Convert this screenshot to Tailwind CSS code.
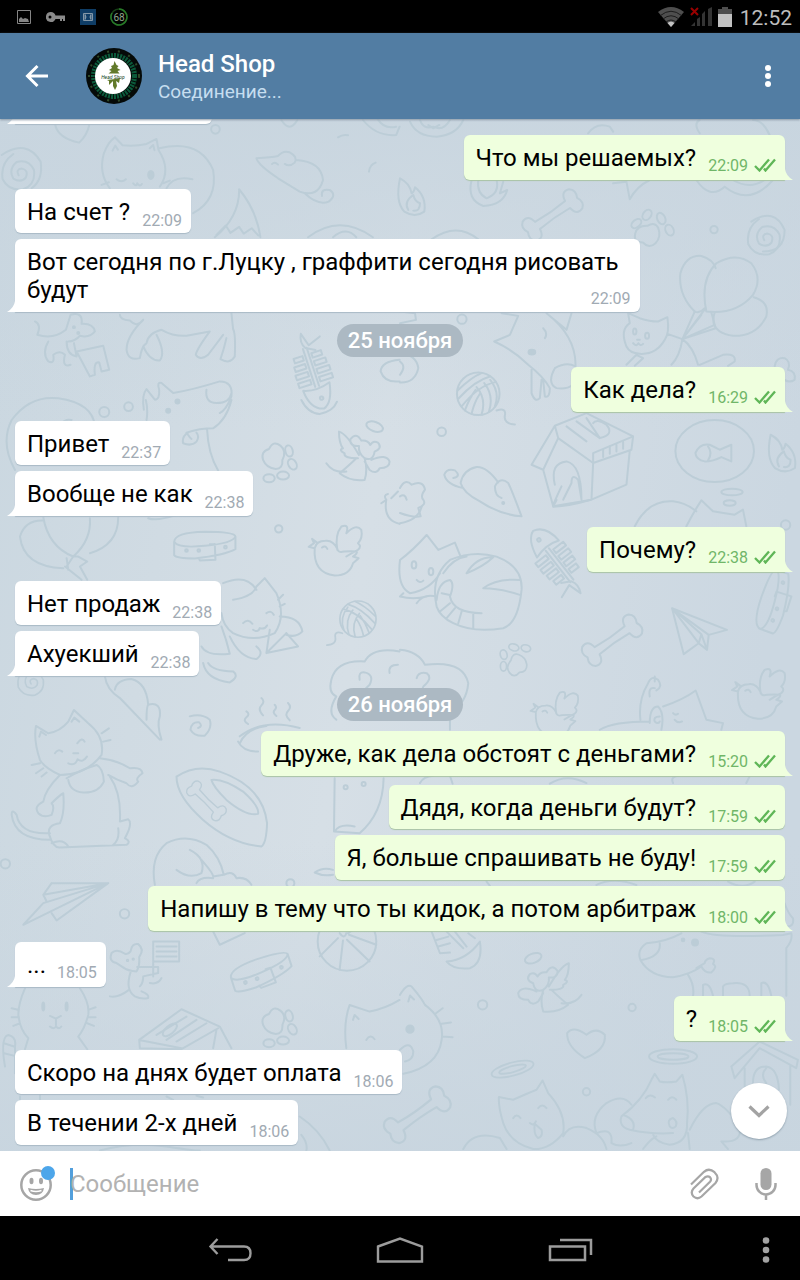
<!DOCTYPE html>
<html lang="ru">
<head>
    <meta charset="UTF-8">
    <meta name="viewport" content="width=device-width, initial-scale=1.0">
    <title>Head Shop</title>
    <script src="https://cdn.jsdelivr.net/npm/@tailwindcss/browser@4"></script>
</head>
<body class="bg-black font-['Roboto',sans-serif]">

<!-- Shared shapes -->
<svg class="absolute size-0" aria-hidden="true">
    <defs>
        <symbol id="ticks" viewBox="0 0 22 14">
            <path d="M1 8l4.500 4.500L15 1.500M10 10.500l1.500 2L21 1.500" fill="none" stroke="#5fb657" stroke-width="2.300"/>
        </symbol>
        <symbol id="tail-in" viewBox="0 0 8 11"><path d="M8 0Q7 7 0 11H8Z" fill="#fff"/></symbol>
        <symbol id="tail-out" viewBox="0 0 8 11"><path d="M0 0Q1 7 8 11H0Z" fill="#efffde"/></symbol>

        <g id="paw">
            <path d="M-30 5Q-38 -20 -12 -28Q0 -55 22 -38Q42 -22 28 5Q30 32 8 32Q-20 30 -30 5Z"/>
            <ellipse cx="48" cy="-22" rx="11" ry="17" transform="rotate(-15 48 -22)"/>
            <ellipse cx="58" cy="18" rx="12" ry="17" transform="rotate(-30 58 18)"/>
            <ellipse cx="30" cy="52" rx="18" ry="12"/>
            <ellipse cx="-12" cy="60" rx="17" ry="12"/>
        </g>
        <g id="bone">
            <path d="M-55 -13Q0 -8 55 -13Q60 -45 85 -35Q102 -22 90 0Q102 22 85 35Q60 45 55 13Q0 8 -55 13Q-60 45 -85 35Q-102 22 -90 0Q-102 -22 -85 -35Q-60 -45 -55 -13Z"/>
        </g>
        <g id="spiral">
            <path d="M-6 6Q-16 -12 4 -14Q24 -10 16 12Q2 30 -22 16Q-38 -12 -12 -34Q24 -44 40 -10Q46 34 8 48Q-36 54 -54 18Q-62 -30 -22 -58"/>
        </g>
        <g id="yarn">
            <circle r="64"/>
            <path d="M-62 -10Q-20 -50 10 -62M-60 15Q-10 -40 35 -52M-50 38Q0 -25 52 -35M-5 -20Q25 15 10 62M18 -32Q48 5 32 54M36 -42Q66 -5 50 38M-40 50Q-28 15 -8 -12M-20 60Q-12 25 5 0M55 50Q85 40 80 65T110 92"/>
        </g>
        <g id="bird">
            <path d="M-60 -20Q-65 55 0 62Q45 62 55 25L72 10L55 5Q70 -5 66 -10Q50 -12 28 -10Q10 -5 8 -18Q-5 -45 -28 -42Q-55 -42 -60 -20ZM-60 -20L-78 -24L-62 -35L-68 -48L-52 -36M8 -15Q0 -60 20 -85Q45 -95 35 -65Q65 -95 80 -75Q85 -50 70 -35Q82 -25 70 -15Q50 -5 35 5M-38 -22Q-28 -30 -22 -18"/>
        </g>
        <g id="fishbone">
            <path d="M-95 -8L-55 -20L-70 -60M-95 -8Q-70 5 -50 -8L-35 -35M-50 -12L70 -12M-50 0L70 0M70 -45Q130 -35 140 -5Q130 35 70 38Q85 0 70 -45Z"/>
            <path d="M-30 -50h14v30h-14zM-5 -56h14v36h-14zM20 -60h14v40h-14zM45 -60h14v40h-14zM-30 8h14v28h-14zM-5 8h14v34h-14zM20 8h14v38h-14zM45 8h14v38h-14z"/>
            <circle cx="108" cy="-8" r="5"/>
        </g>
        <g id="mouse">
            <path d="M-105 -55Q-100 -35 -40 5L25 45Q80 65 95 10Q90 -45 15 -50M-105 -55Q-60 -58 -40 -62Q-25 -80 -5 -73Q20 -60 10 -42Q-5 -28 -20 -38M40 50Q80 88 112 75Q138 55 115 40Q88 35 92 58M-58 -38q8 -8 18 2"/>
        </g>
        <g id="flame">
            <path d="M-35 -55Q-5 -40 0 -10Q8 -15 10 -28Q45 0 38 45Q10 65 -22 45Q-50 15 -35 -55ZM-10 40Q-25 15 5 -5Q10 15 25 20Q25 45 5 42"/>
        </g>
        <g id="plane">
            <path d="M-80 -60L85 5L30 20L25 65L0 45L-45 78ZM-80 -60L0 45L8 18ZM-80 -60L30 20M8 18L25 65"/>
        </g>
        <g id="collar">
            <path d="M-92 -12Q-90 -40 0 -42Q90 -42 92 -28L92 10Q60 28 -30 38Q-85 38 -92 28ZM-92 -12Q-80 8 0 0Q85 -8 92 -28M15 -5L30 -5L32 42L-15 44L-18 36"/>
            <circle cx="-55" cy="14" r="4"/><circle cx="-18" cy="14" r="4"/><circle cx="62" cy="4" r="4"/>
        </g>
        <g id="angel">
            <path d="M-45 -22Q-60 -5 -35 5Q-30 35 -5 25Q15 10 12 -12Q40 -10 38 -32Q20 -55 5 -28Q-15 -30 -22 -15Q-30 -30 -45 -22ZM12 15Q50 -50 72 -55Q72 -20 60 -5Q75 0 55 10Q60 25 15 25M-25 30Q-70 10 -80 35Q-80 55 -50 55Q-40 75 -20 60L-5 35M-5 25Q-15 60 -5 90Q40 95 70 70Q40 45 20 25M50 65Q90 70 110 40"/>
            <ellipse cx="-35" cy="-70" rx="26" ry="14" transform="rotate(-20 -35 -70)"/>
        </g>
        <g id="halo">
            <ellipse rx="72" ry="22"/><ellipse rx="46" ry="10"/>
        </g>
    </defs>
</svg>

<div class="flex h-screen flex-col">

    <!-- Status bar -->
    <div class="flex h-[33px] shrink-0 items-center justify-between bg-black pr-2 pl-4 text-[#bdbdbd]">
        <div class="flex items-center gap-3.5">
            <svg class="h-4 w-4" viewBox="0 0 16 16" fill="none" stroke="#858585"><path d="M1.500 1.500h13v13h-13z"/><path d="M3 13v-3l2-2 2 2 2-1 3 1 1 3z" fill="#858585" stroke="none"/></svg>
            <svg class="h-4 w-5" viewBox="0 0 20 16"><path d="M5 3a5 5 0 1 0 4.500 7H14v2h2v-2h1v2h2V6.500H9.500A5 5 0 0 0 5 3z" fill="#8a8a8a"/><circle cx="4" cy="8" r="1.500" fill="#000"/></svg>
            <svg class="h-4 w-4" viewBox="0 0 16 16"><path d="M0 0h16v16H0z" fill="#0f3d66"/><path d="M3.500 4.500h9v7h-9z" fill="none" stroke="#8397a7"/><path d="M5 5.500q2 2.500 0 5zM11 5.500q-2 2.500 0 5z" fill="#8397a7" stroke="#8397a7"/></svg>
            <svg class="size-[18px]" viewBox="0 0 18 18"><circle cx="9" cy="9" r="8" fill="none" stroke="#173f17" stroke-width="1.500"/><path d="M9 1a8 8 0 1 1-7 4" fill="none" stroke="#277a27" stroke-width="1.500"/><text x="9" y="12.500" text-anchor="middle" font-size="10" fill="#8fa58c">68</text></svg>
        </div>
        <div class="flex items-center gap-1.5">
            <svg class="h-5 w-[26px]" viewBox="0 0 26 20"><path d="M0 5Q13-5 26 5L13 20z" fill="#4e4e4e"/><path d="M2.500 8.500Q13 0 23.500 8.500M5 12Q13 5.500 21 12M8 15Q13 11 18 15" fill="none" stroke="#1c1c1c"/><path d="M9.500 16Q13 13 16.500 16L13 20z" fill="#c4c4c4"/></svg>
            <svg class="h-5 w-[22px]" viewBox="0 0 22 20"><path d="M1 19l4-4v4zM7 19v-7l3-2v9zM12 19V7l3-3v15zM18 19V2l4-2v19z" fill="#343434"/><path d="M1 1l7 7M8 1L1 8" stroke="#900" stroke-width="2"/></svg>
            <svg class="h-5 w-3.5" viewBox="0 0 14 20"><path d="M4 0h6v2h4v18H0V2h4z" fill="#4e4e4e"/><path d="M0 7h14v13H0z" fill="#c2c2c2"/></svg>
            <span class="mt-0.5 ml-0.5 text-[21px] leading-7">12:52</span>
        </div>
    </div>

    <!-- Chat header -->
    <header class="relative z-10 flex h-[86px] shrink-0 items-center bg-[#527da3] pr-5 pl-6 text-white shadow-[0_1px_2px_#8b9aa7]">
        <button type="button" aria-label="Назад" class="mr-9 size-[26px]">
            <svg class="size-[26px]" viewBox="0 0 26 26" fill="none" stroke="#fff" stroke-width="3"><path d="M24 13H4M13.500 3L3.500 13l10 10"/></svg>
        </button>
        <svg class="size-14" viewBox="0 0 56 56">
            <circle cx="28" cy="28" r="28" fill="#050a08"/>
            <circle cx="28" cy="28" r="25" fill="none" stroke="#2f4a2a" stroke-width="2" stroke-dasharray="2 9"/>
            <circle cx="28" cy="28" r="20.500" fill="none" stroke="#0b5a3a" stroke-width="5" stroke-dasharray="2 1"/>
            <circle cx="27" cy="28" r="18" fill="#fff"/>
            <path d="M28.500 13l2 4 2 1-1.500 2 3.500 2-3 1 2 2.500h-11l3-2.500-2.500-1 3-2-1-2 2.500-1zM29 31l5-1-1 5-3-2 1 5-2 4-2-4v-5l-4 4v-4l-2-1z" fill="#61792a"/>
            <text x="27" y="30.500" text-anchor="middle" font-size="5" font-style="italic" fill="#123f1d">Head Shop</text>
        </svg>
        <div class="ml-4 flex-1 pt-1">
            <h1 class="text-2xl leading-7 font-medium">Head Shop</h1>
            <p class="text-[19px] leading-7 text-[#c6def0]">Соединение...</p>
        </div>
        <button type="button" aria-label="Меню" class="flex h-10 w-6 items-center justify-center">
            <svg class="h-6 w-2" viewBox="0 0 8 24" fill="#fff"><circle cx="4" cy="4" r="3"/><circle cx="4" cy="12" r="3"/><circle cx="4" cy="20" r="3"/></svg>
        </button>
    </header>

    <!-- Conversation -->
    <main class="relative flex-1 overflow-hidden bg-[#cbd7e1]">
        <svg class="absolute inset-0 size-full" viewBox="0 119 800 1032" preserveAspectRatio="xMidYMin slice" aria-hidden="true">
            <defs>
                <linearGradient id="sky" x1="0" y1="0.100" x2="1" y2="0.300">
                    <stop offset="0" stop-color="#cad7e0"/>
                    <stop offset="0.500" stop-color="#d6dfe6"/>
                    <stop offset="1" stop-color="#cbd7e1"/>
                </linearGradient>
                <linearGradient id="dusk" x1="0" y1="0" x2="0" y2="1">
                    <stop offset="0" stop-color="#c8d5df" stop-opacity="0.900"/>
                    <stop offset="0.300" stop-color="#c8d5df" stop-opacity="0"/>
                    <stop offset="0.700" stop-color="#c8d5df" stop-opacity="0"/>
                    <stop offset="1" stop-color="#c8d5df" stop-opacity="0.900"/>
                </linearGradient>
            </defs>
            <path d="M0 119h800v1032H0z" fill="url(#sky)"/>
            <path d="M0 119h800v1032H0z" fill="url(#dusk)"/>

            <!-- Doodles, each area in its own 1/3 scale space -->
            <g fill="none" stroke="#bccdd7" stroke-width="6" stroke-linecap="round" stroke-linejoin="round">
                <g transform="translate(0 120) scale(0.333)">
                    <path d="M166 15Q175 55 238 68Q262 45 268 15"/>
                    <circle cx="647" cy="28" r="13"/>
                    <path d="M845 0Q870 40 893 0M1090 0Q1130 50 1190 45L1200 20M1130 -10Q1150 30 1190 20M1015 52Q1030 42 1045 46M1108 155Q1110 135 1128 128"/>
                    <use href="#spiral" transform="translate(62 160)"/>
                    <path d="M5 105Q80 55 122 125Q130 180 95 205"/>
                    <path d="M330 205Q295 160 312 100Q325 65 345 52L368 76Q405 80 440 72L470 57L476 90Q515 150 480 200M338 92l8 -15 8 12M450 85l10 -10 4 16M350 178q15 12 28 0M400 190q10 12 12 0q8 12 14 2M305 195l22 -8M490 190l20 -8M478 85Q600 55 640 150Q655 240 580 280M500 205Q520 165 578 178"/>
                    <ellipse cx="453" cy="165" rx="8" ry="12" fill="#bccdd7"/>
                    <use href="#mouse" transform="translate(875 170)"/>
                    <path d="M645 352Q720 290 718 208Q770 270 782 352M650 345l28 -28 14 22 26 -18 14 20 24 -16 20 22"/>
                    <path d="M925 352Q1020 280 1120 352M1000 352Q1040 318 1070 352"/>
                    <path d="M360 585Q360 600 390 602Q410 625 430 600M430 600Q380 650 380 690Q385 725 420 715Q425 680 440 670Q445 640 485 630Q520 650 560 648L630 635Q590 690 588 705Q600 725 625 705L670 645M430 680Q450 725 480 722Q498 700 470 645M695 580L700 628Q708 640 705 710Q690 735 662 718Q672 690 680 655"/>
                    <path d="M105 605Q125 615 112 645Q160 660 198 630L212 585Q250 575 245 612Q280 610 285 635Q270 655 240 648Q225 665 205 665M145 665Q125 700 145 725Q165 735 160 705Q180 690 195 705Q185 745 212 735M200 665Q200 705 230 710L222 670M230 695L310 678L328 750L305 755L298 728Q280 725 285 765L270 770Z"/>
                    <circle cx="222" cy="622" r="3"/><circle cx="235" cy="640" r="3"/>
                    <use href="#fishbone" transform="translate(925 735) rotate(72)"/>
                    <path d="M432 870Q425 825 440 808L465 840Q480 840 478 810Q470 785 485 790L520 820Q580 810 660 785Q700 785 695 830Q680 870 660 880M620 810Q615 850 650 850Q690 850 695 820"/>
                    <circle cx="533" cy="845" r="6" fill="#bccdd7"/>
                    <path d="M1200 720Q1145 725 1143 755Q1155 790 1200 785"/>
                </g>

                <g transform="translate(400 120) scale(0.333)">
                    <path d="M30 5Q50 50 110 50Q170 45 190 0M60 0Q70 30 100 20Q130 35 150 0M85 15l15 10 18 -10"/>
                    <path d="M565 40Q590 5 630 20L640 35M900 40Q880 10 900 0M1110 45Q1090 0 1060 0"/>
                </g>

                <g transform="translate(400 180) scale(0.333)">
                    <use href="#flame" transform="translate(35 50)"/>
                    <path d="M215 0Q200 60 250 78Q310 75 322 30L300 40L310 5M235 0Q230 40 260 55Q300 40 290 0"/>
                    <use href="#bone" transform="translate(458 105) rotate(-35)"/>
                    <path d="M95 178Q170 125 235 178M640 10L680 5L690 58Q710 20 750 0"/>
                    <use href="#paw" transform="translate(750 165) rotate(-115)"/>
                    <circle cx="943" cy="149" r="11"/>
                    <path d="M890 0Q930 60 975 20Q1050 80 1120 0M1000 0Q1050 30 1095 0"/>
                    <use href="#spiral" transform="translate(1100 175)"/>
                    <path d="M1055 125Q1125 80 1155 150Q1155 215 1090 215"/>
                    <!-- balloons -->
                    <path d="M885 395Q835 345 842 280Q858 225 905 228Q940 238 948 265M885 395Q900 402 915 385M920 395Q900 300 950 250Q1010 215 1055 250Q1090 295 1060 345Q1010 405 920 395M1062 352Q1110 365 1100 410Q1070 470 1000 468Q950 460 942 430Q940 410 945 398"/>
                    <path d="M885 395L848 478L918 385M905 405L848 478L945 435M935 398L948 445L848 478"/>
                    <path d="M680 500Q660 450 690 430L685 400L720 415Q750 425 775 425L803 412Q810 460 795 480Q770 525 720 522Q690 520 680 500ZM803 462L848 478Q880 500 895 555M815 555Q840 530 848 478M900 555L970 525Q1010 520 1005 545L985 558M680 555L710 525L730 535L705 558"/>
                    <ellipse cx="705" cy="455" rx="5" ry="9"/><ellipse cx="742" cy="468" rx="6" ry="9"/><path d="M700 490q10 12 16 0q6 10 14 2M712 480h8"/>
                    <path d="M305 400L355 408L330 465L283 485Q340 510 385 555Q430 590 450 625M440 400Q530 470 527 560Q500 545 465 565Q440 610 470 625Q500 630 520 615M395 570L395 640Q405 670 420 655L425 600M430 600L435 650Q450 655 450 625M430 445Q445 460 435 475M440 400L500 450L515 400"/>
                    <ellipse cx="396" cy="517" rx="10" ry="7" fill="#bccdd7"/>
                    <circle cx="186" cy="418" r="14"/>
                    <path d="M0 520Q50 525 55 565Q45 610 0 608M0 545Q20 560 0 585M0 395L45 400L48 420L0 430"/>
                    <use href="#yarn" transform="translate(235 642)"/>
                    <circle cx="125" cy="756" r="13"/>
                    <path d="M395 855L465 738L560 700L700 770L695 810L580 850L475 775L430 870ZM465 738L475 775M580 850L580 820L700 770M580 850L575 960L460 980L430 870M690 812L680 915L575 960M460 975Q480 930 485 920M465 915Q450 850 500 845Q545 855 545 960M490 960L515 910Q515 880 535 900L545 960"/>
                    <path d="M500 740l60 45M530 725l70 50M560 715l40 60q45 -10 20 -40q-30 -20 -40 -5M610 810v22M630 800v22M650 795v20M670 785v22"/>
                    <ellipse cx="945" cy="814" rx="118" ry="93"/>
                    <path d="M887 820Q900 790 930 795L960 810L995 795V845L965 832Q940 845 915 845Q890 840 887 820M925 800Q940 820 925 842"/>
                    <use href="#flame" transform="translate(1148 820)"/>
                    <path d="M1125 560Q1130 530 1155 535Q1175 545 1165 570Q1190 575 1185 600Q1170 610 1155 600"/>
                    <path d="M365 1010Q335 930 325 910Q300 890 285 920Q285 950 305 955M295 908Q260 860 230 862Q190 870 182 910Q190 940 240 965Q300 1005 365 1010M190 925Q140 915 133 885Q140 865 165 872Q185 890 160 895"/>
                    <circle cx="310" cy="970" r="3"/>
                    <path d="M0 925Q15 895 35 915Q70 900 75 930Q60 950 70 960Q80 975 55 985L62 1010Q40 1015 0 1000M0 950Q15 940 20 960"/>
                    <ellipse cx="997" cy="937" rx="32" ry="10"/><ellipse cx="990" cy="970" rx="18" ry="8"/>
                    <path d="M705 1040Q745 960 820 965Q860 970 890 995M860 1040Q880 1000 905 962L940 995Q970 1000 1005 1005L1030 990L1040 1040"/>
                </g>

                <g transform="translate(0 400) scale(0.333)">
                    <path d="M45 210Q0 130 35 60Q90 -15 175 -5Q280 10 285 80M180 75Q195 55 215 60"/>
                    <circle cx="313" cy="36" r="15"/><circle cx="386" cy="20" r="13"/>
                    <circle cx="505" cy="32" r="6" fill="#bccdd7"/>
                    <path d="M440 60Q445 30 438 0M560 98Q600 85 640 85Q680 60 695 0M565 98Q545 110 550 130Q575 140 590 125Q600 110 590 98M565 105q5 8 10 12M622 90Q625 160 655 212M445 355Q470 365 530 345"/>
                    <path d="M905 0Q925 40 960 42Q1000 35 1012 5"/>
                    <use href="#paw" transform="translate(820 175)"/>
                    <use href="#angel" transform="translate(1090 150) scale(-1 1)"/>
                    <path d="M130 352Q145 440 220 470Q275 420 270 355M130 362Q75 360 60 410Q70 500 190 505M270 460Q355 435 355 352M200 500L220 470L235 470L262 485L240 500L262 540M195 500L245 540M200 475L205 510"/>
                    <use href="#collar" transform="translate(615 438)"/>
                    <circle cx="837" cy="387" r="11"/>
                    <use href="#bird" transform="translate(1005 465)"/>
                    <path d="M1145 310L1160 300Q1150 285 1165 282M1160 300Q1150 360 1200 372M1175 295l20 -20"/>
                    <path d="M670 550Q740 520 770 570M700 600Q760 590 770 560L795 535L830 580Q860 650 825 700Q760 730 700 700Q670 680 665 640M840 650Q900 650 908 695Q890 715 860 705M835 600l15 -15M840 620l15 -8M800 640q15 -10 22 5M730 670q15 -15 28 2M760 690q15 10 20 -5q15 5 22 -8M810 690L800 760L895 740L860 700M800 760L860 700M690 710Q720 775 770 778Q795 760 770 740M605 740Q620 770 690 762Q680 720 665 680M610 790Q620 840 690 848Q720 830 700 815Q640 815 625 790"/>
                    <use href="#yarn" transform="translate(1075 658) scale(-0.850 0.850)"/>
                    <path d="M1200 755Q1120 740 1095 785Q1010 780 995 840Q985 880 1010 890Q980 940 1010 960M1080 840Q1075 815 1095 818Q1125 825 1110 855L1095 870M1170 820Q1165 795 1195 795"/>
                    <use href="#spiral" transform="translate(98 848) scale(0.800)"/>
                    <path d="M315 830Q320 870 360 895L480 1020M345 870Q350 840 395 838Q440 850 445 915Q485 905 480 950Q470 975 485 1020M440 960Q440 920 445 915"/>
                    <path d="M570 950Q605 940 630 960Q638 985 615 1008Q585 1012 572 990Q575 965 598 968Q610 980 595 985M740 935q12 8 0 18t5 20M785 895q12 10 0 22t5 30M825 915q8 8 0 16t5 18M865 910q12 12 0 24t5 28M720 1010Q790 955 900 985"/>
                </g>

                <g transform="translate(400 500) scale(0.333)">
                    <path d="M0 70Q55 60 65 20M460 20L470 0M460 20Q510 18 570 0"/>
                    <path d="M0 180Q40 150 80 105L115 150L165 128L182 170M0 180Q-10 260 30 280Q90 270 120 220M10 280L0 290Q40 300 80 290M50 310Q70 280 110 290M110 320Q90 230 150 180Q220 150 290 170Q370 200 365 270Q355 370 310 385Q220 400 160 370Q120 350 110 320ZM110 300Q115 245 150 240Q165 250 150 290Q160 340 245 340M120 335l30 -25M140 355l25 -30M175 370l10 -35M220 385l0 -45M125 280l25 5M200 220Q230 170 280 172Q250 200 200 220M250 265Q290 235 360 240M250 265Q300 265 360 285M130 220Q160 175 200 170"/>
                    <ellipse cx="42" cy="195" rx="7" ry="11"/><ellipse cx="93" cy="215" rx="7" ry="11"/><path d="M50 240q10 12 20 2"/>
                    <use href="#fishbone" transform="translate(490 200) rotate(232)"/>
                    <circle cx="1158" cy="75" r="14"/>
                    <use href="#collar" transform="translate(1125 305) rotate(-70)"/>
                    <use href="#plane" transform="translate(897 385)"/>
                    <use href="#bone" transform="translate(637 421) rotate(-35)"/>
                    <use href="#paw" transform="translate(355 492) rotate(195) scale(0.850)"/>
                    <use href="#bird" transform="translate(1075 595)"/>
                    <use href="#bird" transform="translate(462 655) scale(0.900)"/>
                    <path d="M0 450Q55 455 75 495Q190 480 205 550Q200 610 150 640L150 690M50 535Q55 515 80 520Q100 535 70 560L65 575M600 690Q640 665 750 665M722 660Q715 600 745 550Q755 525 775 540Q790 560 770 572M765 530V545M750 590Q745 560 765 565M790 620Q850 600 888 572L920 660L970 670L965 690M820 640q8 8 15 2M825 660q10 12 22 5M750 670Q750 620 775 620Q795 640 785 690M780 650q-20 0 -15 15q10 10 15 0"/>
                    <path d="M60 850Q70 830 100 828M150 828L158 852M450 852Q500 820 560 850M820 850Q810 830 840 828M1040 850L1050 830"/>
                </g>

                <g transform="translate(0 700) scale(0.333)">
                    <path d="M120 180Q100 120 108 78L145 100Q180 95 205 65L222 30L265 70Q315 110 305 165Q260 225 180 225Q135 205 120 180ZM118 110l5 -15 15 10M215 65l8 -12 15 12M165 160q10 -15 22 -5M232 130q15 -20 22 -5M205 190q20 10 28 -12q15 12 28 -8M220 160h15M305 100l22 -15M310 125l22 -5M95 195l25 -5M108 220l22 -15M125 230l15 -12"/>
                    <path d="M200 235Q240 210 290 195Q310 205 312 245Q295 280 250 278Q210 275 205 240M180 225Q135 270 130 305Q100 320 115 340Q130 355 155 345Q165 320 155 310Q180 285 190 280M300 175Q350 180 390 205Q425 200 428 220Q405 235 415 245Q395 270 380 250Q350 240 325 225M190 280Q195 340 180 370Q140 375 148 405Q160 445 180 443L380 435Q395 425 375 415Q400 370 385 358L360 365Q365 280 330 230M150 400Q60 405 50 345Q35 325 35 345Q45 420 150 420M340 435Q360 420 355 385M155 430Q190 415 205 440"/>
                    <path d="M530 230Q590 190 660 215Q790 260 802 370Q800 430 785 440Q690 430 610 360Q530 290 530 230ZM635 240Q670 235 730 275Q780 320 775 342Q740 350 680 300Q640 260 635 240Z"/>
                    <use href="#bone" transform="translate(620 303) rotate(45) scale(0.700)"/>
                    <path d="M465 555Q450 470 500 430Q560 400 620 435Q660 470 672 525M570 450Q620 475 605 520Q570 540 530 510M605 480Q640 520 640 530L672 525Q700 510 710 535Q740 530 755 555M590 550Q600 530 640 535"/>
                    <path d="M1005 235L1003 395L1080 400Q1150 340 1152 235M1005 395Q1020 370 1065 380"/>
                    <circle cx="1038" cy="262" r="6"/><circle cx="1092" cy="252" r="6"/>
                    <path d="M945 518Q970 500 1000 510M945 518Q970 530 1000 525"/>
                    <circle cx="16" cy="492" r="14"/><circle cx="374" cy="642" r="14"/><circle cx="872" cy="550" r="12"/>
                    <path d="M155 550H325L70 675L130 610L325 550L130 585L155 550M130 585L140 605M325 550L170 662L155 640"/>
                    <path d="M640 695L660 735L735 700"/>
                    <circle cx="1042" cy="725" r="88"/><path d="M1020 700Q1035 720 1040 700M1015 715L960 770M1030 722L1020 810M1042 720L1110 785M1048 705L1130 735M1045 700L1100 665"/>
                    <use href="#collar" transform="translate(785 818) rotate(-18)"/>
                    <!-- mouse with a flag -->
                    <path d="M350 790Q325 785 335 760Q350 745 375 762Q385 765 392 755Q395 730 415 733Q435 748 418 772Q420 800 410 815Q385 815 365 800L350 790M460 725V830M460 725H538V785H460M470 740h60M470 755h60M470 770h60M392 818Q375 870 405 890Q425 900 445 895Q450 885 425 875M412 802H475V820L430 830M430 830Q430 850 420 860M485 835Q475 855 450 850M330 890Q355 895 385 872"/>
                    <circle cx="383" cy="782" r="2"/><circle cx="400" cy="778" r="2"/>
                    <path d="M720 130Q740 85 800 78M715 125Q730 155 775 155"/>
                </g>

                <g transform="translate(0 940) scale(0.333)">
                    <path d="M75 145Q55 190 55 225Q60 270 85 295L75 328M240 145Q270 190 265 225Q255 265 235 290L262 328M35 205l22 5M35 232h22M40 258l20 -8M265 210l22 -8M265 232h22M262 250l20 8M150 228l18 8 15 -8M168 236v20M150 260q12 10 18 0q10 10 16 0M15 380Q0 290 25 285Q50 290 45 320V400M12 310l30 10M12 340l32 8"/>
                    <ellipse cx="130" cy="200" rx="3" ry="12" fill="#bccdd7"/><ellipse cx="200" cy="200" rx="3" ry="12" fill="#bccdd7"/>
                    <path d="M418 300L545 208L660 260L695 325M418 300L420 325L545 328L655 265M418 300L545 325M470 285L560 230M500 300L590 240M530 305L620 250M650 270L640 325"/>
                    <ellipse cx="510" cy="270" rx="26" ry="12" transform="rotate(-40 510 270)"/>
                    <use href="#paw" transform="translate(820 250)"/>
                    <path d="M1040 325Q1030 250 1050 195L1110 215Q1160 205 1200 180M1060 240l5 -15 12 12M1100 300q12 -20 25 -2"/>
                    <path d="M300 632Q400 605 500 620T600 632M900 530Q960 570 990 632M905 585Q925 610 920 632M60 470v10M120 465v20M500 470l20 10M590 468l20 5"/>
                </g>

                <g transform="translate(400 860) scale(0.333)">
                    <path d="M95 215L120 280L150 278M110 240l35 -10M115 260l35 -10M140 215l50 50M165 215l35 45M140 305Q200 300 240 245Q250 310 210 325Q160 330 140 305ZM205 220l20 15M590 75Q640 50 710 75M260 65L270 78M985 65Q1030 90 1065 65"/>
                    <use href="#angel" transform="translate(435 365)"/>
                    <circle cx="248" cy="435" r="14"/><circle cx="697" cy="443" r="11"/><circle cx="560" cy="696" r="11"/>
                    <path d="M845 220Q800 245 740 250Q710 270 722 300Q750 350 820 352Q870 345 905 320Q915 340 935 338Q955 320 940 312Q950 295 930 295Q915 300 915 310L890 325M780 250Q785 290 725 300M865 345Q885 375 880 408M905 215Q950 235 1150 225L1175 220Q1180 240 1160 265L1160 408M910 408V375Q930 365 940 408M970 408V380Q975 370 1000 370Q1050 365 1050 408M1085 408V370Q1105 360 1115 408M1155 130Q1165 160 1180 175Q1185 200 1160 200"/>
                    <circle cx="850" cy="240" r="4" fill="#bccdd7"/><circle cx="886" cy="248" r="9" fill="#bccdd7"/>
                    <path d="M0 405Q20 370 35 380Q65 415 75 435Q135 480 125 540Q115 620 10 642M25 425l5 -18 12 12M108 460l20 -15M125 492l28 -4M128 530l30 2M0 570Q30 540 40 575Q40 600 15 605"/>
                    <circle cx="30" cy="508" r="11" fill="#bccdd7"/>
                    <path d="M555 595Q500 560 502 520Q520 495 560 525Q590 500 615 525Q620 570 555 595Z"/>
                    <use href="#halo" transform="translate(338 628) rotate(-15) scale(0.900)"/>
                    <use href="#halo" transform="translate(820 590)"/>
                    <use href="#bone" transform="translate(52 765) rotate(-35) scale(1.100)"/>
                    <path d="M310 790Q295 740 297 712L340 720Q385 700 410 690L428 662L445 700Q500 760 490 820Q450 870 400 868Q330 850 310 790ZM340 775q10 -15 22 0M415 745q12 -15 25 0M390 790q12 10 18 -5M405 790Q400 825 415 835Q430 830 425 810L408 795M190 868Q220 810 300 835L320 868M490 830Q510 790 560 805Q610 825 620 868"/>
                    <path d="M665 770Q730 720 755 660L765 642L780 665Q800 670 830 665L848 645Q870 720 862 790Q865 850 810 855Q770 850 760 825M665 770Q655 800 690 810Q760 825 820 820M670 765Q710 780 700 810M738 715q12 -15 28 -2M805 720q12 -15 25 0M810 800Q800 780 820 775Q835 785 828 800Q818 810 810 800M695 735Q670 700 620 730Q570 770 590 820Q640 800 635 850Q660 865 695 850M870 810Q910 730 950 730Q980 740 1020 800Q1030 850 965 845L985 868M730 868Q750 840 770 830M865 820L870 868"/>
                    <path d="M995 620L1080 545L1195 600L1190 625L1080 565L1005 655L995 620M1035 625V690M1172 620V735M1060 670Q1060 620 1100 620Q1135 625 1138 690M1100 625q-20 20 0 45"/>
                </g>
            </g>
        </svg>

        <div class="relative flex h-full flex-col justify-end px-[15px] pb-1.5 text-2xl leading-7 text-black">

            <div class="relative mb-[11px] h-11 w-[197px] shrink-0 rounded-md rounded-bl-none bg-white shadow-[0_1px_1px_#a9bac6]">
                <svg class="absolute bottom-0 -left-2 h-[11px] w-2"><use href="#tail-in"/></svg>
            </div>

            <div class="relative mb-[9px] flex items-end self-end rounded-md rounded-br-none bg-[#efffde] pt-[9px] pr-[9px] pb-2 pl-3 shadow-[0_1px_1px_#a9c4a5]">
                <p>Что мы решаемых?</p>
                <time class="-mb-1 ml-3 text-base leading-5 text-[#70b668]">22:09</time>
                <svg class="ml-1.5 h-3.5 w-[22px]"><use href="#ticks"/></svg>
                <svg class="absolute -right-2 bottom-0 h-[11px] w-2"><use href="#tail-out"/></svg>
            </div>

            <div class="relative mb-1.5 flex items-end self-start rounded-md bg-white pt-[9px] pr-[9px] pb-[7px] pl-3 shadow-[0_1px_1px_#a9bac6]">
                <p>На счет ?</p>
                <time class="-mb-[5px] ml-3 text-base leading-5 text-[#a1aab3]">22:09</time>
            </div>

            <div class="relative mb-3 grid self-start rounded-md rounded-bl-none bg-white pt-[9px] pr-[9px] pb-2 pl-3 shadow-[0_1px_1px_#a9bac6]">
                <p class="col-start-1 row-start-1 mr-3">Вот сегодня по г.Луцку , граффити сегодня рисовать<br>будут</p>
                <time class="col-start-1 row-start-1 -mb-[5px] self-end justify-self-end text-base leading-5 text-[#a1aab3]">22:09</time>
                <svg class="absolute bottom-0 -left-2 h-[11px] w-2"><use href="#tail-in"/></svg>
            </div>

            <h2 class="mb-2.5 self-center rounded-full bg-[#acb9c3] px-[11px] text-[22px] leading-[33px] font-medium text-white">25 ноября</h2>

            <div class="relative mb-[9px] flex items-end self-end rounded-md rounded-br-none bg-[#efffde] pt-[9px] pr-[9px] pb-2 pl-3 shadow-[0_1px_1px_#a9c4a5]">
                <p>Как дела?</p>
                <time class="-mb-1 ml-3 text-base leading-5 text-[#70b668]">16:29</time>
                <svg class="ml-1.5 h-3.5 w-[22px]"><use href="#ticks"/></svg>
                <svg class="absolute -right-2 bottom-0 h-[11px] w-2"><use href="#tail-out"/></svg>
            </div>

            <div class="relative mb-1.5 flex items-end self-start rounded-md bg-white pt-[9px] pr-[9px] pb-[7px] pl-3 shadow-[0_1px_1px_#a9bac6]">
                <p>Привет</p>
                <time class="-mb-[5px] ml-3 text-base leading-5 text-[#a1aab3]">22:37</time>
            </div>

            <div class="relative mb-[11px] flex items-end self-start rounded-md rounded-bl-none bg-white pt-[9px] pr-[9px] pb-2 pl-3 shadow-[0_1px_1px_#a9bac6]">
                <p>Вообще не как</p>
                <time class="-mb-[5px] ml-3 text-base leading-5 text-[#a1aab3]">22:38</time>
                <svg class="absolute bottom-0 -left-2 h-[11px] w-2"><use href="#tail-in"/></svg>
            </div>

            <div class="relative mb-[9px] flex items-end self-end rounded-md rounded-br-none bg-[#efffde] pt-[9px] pr-[9px] pb-2 pl-3 shadow-[0_1px_1px_#a9c4a5]">
                <p>Почему?</p>
                <time class="-mb-1 ml-3 text-base leading-5 text-[#70b668]">22:38</time>
                <svg class="ml-1.5 h-3.5 w-[22px]"><use href="#ticks"/></svg>
                <svg class="absolute -right-2 bottom-0 h-[11px] w-2"><use href="#tail-out"/></svg>
            </div>

            <div class="relative mb-1.5 flex items-end self-start rounded-md bg-white pt-[9px] pr-[9px] pb-[7px] pl-3 shadow-[0_1px_1px_#a9bac6]">
                <p>Нет продаж</p>
                <time class="-mb-[5px] ml-3 text-base leading-5 text-[#a1aab3]">22:38</time>
            </div>

            <div class="relative mb-3 flex items-end self-start rounded-md rounded-bl-none bg-white pt-[9px] pr-[9px] pb-2 pl-3 shadow-[0_1px_1px_#a9bac6]">
                <p>Ахуекший</p>
                <time class="-mb-[5px] ml-3 text-base leading-5 text-[#a1aab3]">22:38</time>
                <svg class="absolute bottom-0 -left-2 h-[11px] w-2"><use href="#tail-in"/></svg>
            </div>

            <h2 class="mb-2.5 self-center rounded-full bg-[#acb9c3] px-[11px] text-[22px] leading-[33px] font-medium text-white">26 ноября</h2>

            <div class="relative mb-[9px] flex items-end self-end rounded-md rounded-br-none bg-[#efffde] pt-[9px] pr-[9px] pb-2 pl-3 shadow-[0_1px_1px_#a9c4a5]">
                <p>Друже, как дела обстоят с деньгами?</p>
                <time class="-mb-1 ml-3 text-base leading-5 text-[#70b668]">15:20</time>
                <svg class="ml-1.5 h-3.5 w-[22px]"><use href="#ticks"/></svg>
                <svg class="absolute -right-2 bottom-0 h-[11px] w-2"><use href="#tail-out"/></svg>
            </div>

            <div class="relative mb-1.5 flex items-end self-end rounded-md bg-[#efffde] pt-[9px] pr-[9px] pb-[7px] pl-3 shadow-[0_1px_1px_#a9c4a5]">
                <p>Дядя, когда деньги будут?</p>
                <time class="-mb-[5px] ml-3 text-base leading-5 text-[#70b668]">17:59</time>
                <svg class="-mb-px ml-1.5 h-3.5 w-[22px]"><use href="#ticks"/></svg>
            </div>

            <div class="relative mb-1.5 flex items-end self-end rounded-md bg-[#efffde] pt-[9px] pr-[9px] pb-2 pl-3 shadow-[0_1px_1px_#a9c4a5]">
                <p>Я, больше спрашивать не буду!</p>
                <time class="-mb-[5px] ml-3 text-base leading-5 text-[#70b668]">17:59</time>
                <svg class="-mb-px ml-1.5 h-3.5 w-[22px]"><use href="#ticks"/></svg>
            </div>

            <div class="relative mb-[11px] flex items-end self-end rounded-md rounded-br-none bg-[#efffde] pt-[9px] pr-[9px] pb-2 pl-3 shadow-[0_1px_1px_#a9c4a5]">
                <p>Напишу в тему что ты кидок, а потом арбитраж</p>
                <time class="-mb-[5px] ml-3 text-base leading-5 text-[#70b668]">18:00</time>
                <svg class="-mb-px ml-1.5 h-3.5 w-[22px]"><use href="#ticks"/></svg>
                <svg class="absolute -right-2 bottom-0 h-[11px] w-2"><use href="#tail-out"/></svg>
            </div>

            <div class="relative mb-[9px] flex items-end self-start rounded-md rounded-bl-none bg-white pt-[9px] pr-[9px] pb-2 pl-3 shadow-[0_1px_1px_#a9bac6]">
                <p>...</p>
                <time class="-mb-1 ml-[11px] text-base leading-5 text-[#a1aab3]">18:05</time>
                <svg class="absolute bottom-0 -left-2 h-[11px] w-2"><use href="#tail-in"/></svg>
            </div>

            <div class="relative mb-[9px] flex items-end self-end rounded-md rounded-br-none bg-[#efffde] pt-[9px] pr-[9px] pb-2 pl-3 shadow-[0_1px_1px_#a9c4a5]">
                <p>?</p>
                <time class="-mb-1 ml-[11px] text-base leading-5 text-[#70b668]">18:05</time>
                <svg class="ml-1.5 h-3.5 w-[22px]"><use href="#ticks"/></svg>
                <svg class="absolute -right-2 bottom-0 h-[11px] w-2"><use href="#tail-out"/></svg>
            </div>

            <div class="relative mb-1.5 flex items-end self-start rounded-md bg-white pt-[9px] pr-[9px] pb-[7px] pl-3 shadow-[0_1px_1px_#a9bac6]">
                <p>Скоро на днях будет оплата</p>
                <time class="-mb-[5px] ml-3 text-base leading-5 text-[#a1aab3]">18:06</time>
            </div>

            <div class="relative flex items-end self-start rounded-md bg-white pt-[9px] pr-[9px] pb-2 pl-3 shadow-[0_1px_1px_#a9bac6]">
                <p>В течении 2-х дней</p>
                <time class="-mb-[5px] ml-3 text-base leading-5 text-[#a1aab3]">18:06</time>
            </div>
        </div>

        <!-- Scroll to the latest message -->
        <button type="button" aria-label="Вниз" class="absolute right-[13px] bottom-3 flex size-14 items-center justify-center rounded-full bg-white shadow-[0_1px_2px_#8fa0ad]">
            <svg class="h-3.5 w-[22px]" viewBox="0 0 22 14" fill="none" stroke="#a3a3a3" stroke-width="3.200"><path d="M1.500 2.500L11 11.500l9.500-9"/></svg>
        </button>
    </main>

    <!-- Message box -->
    <form class="flex h-[65px] shrink-0 items-center bg-white pr-[22px] pl-5">
        <button type="button" aria-label="Смайлы" class="relative mt-0.5 size-8">
            <svg class="size-8" viewBox="0 0 32 32"><circle cx="16" cy="16" r="14.700" fill="none" stroke="#a6a6a6" stroke-width="2.500"/><ellipse cx="11.500" cy="12" rx="2" ry="3.200" fill="#a6a6a6"/><ellipse cx="21" cy="12" rx="2" ry="3.200" fill="#a6a6a6"/><path d="M8 19q8 2 16 0q-1 7-8 7t-8-7z" fill="#a6a6a6"/><path d="M10.500 21.500q5.500 2 11 0" fill="none" stroke="#fff" stroke-width="1.500"/></svg>
            <span class="absolute -top-[3px] -right-[3px] size-3.5 rounded-full bg-[#4da6ea]"></span>
        </button>
        <span class="ml-[18px] h-8 w-[3px] bg-[#529fdc]"></span>
        <input type="text" aria-label="Сообщение" placeholder="Сообщение" class="-ml-[3px] h-10 min-w-0 flex-1 text-2xl text-black outline-none placeholder:text-[#b2b2b2]">
        <button type="button" aria-label="Прикрепить" class="mr-[35px] h-8 w-[30px]">
            <svg class="h-8 w-[30px]" viewBox="0 0 30 32" fill="none" stroke="#a6a6a6" stroke-width="2.200"><path d="M2 16.500L15 3.800Q20-.500 25.500 4.200Q31 9.500 26.500 15L12.500 28.500Q8.500 32 4.500 28.500Q1 24.500 4.500 20.500L16.500 9Q19 7.500 21 9.200Q23 11.500 21 13.800L10 24.500"/></svg>
        </button>
        <button type="button" aria-label="Голосовое сообщение" class="h-8 w-6">
            <svg class="h-8 w-6" viewBox="0 0 24 32"><rect x="6.500" y="0" width="11" height="22" rx="5.500" fill="#a6a6a6"/><path d="M2.500 15v2a9.500 9.500 0 0 0 19 0v-2M12 26v6" fill="none" stroke="#a6a6a6" stroke-width="2.500"/></svg>
        </button>
    </form>

    <!-- System navigation -->
    <nav class="grid h-16 shrink-0 grid-cols-[1fr_auto_1fr] items-center bg-black pt-1">
        <div class="col-start-2 flex">
            <button type="button" aria-label="Назад" class="flex h-12 w-[170px] items-center justify-center">
                <svg class="h-6 w-11" viewBox="0 0 44 24" fill="none" stroke="#9c9c9c" stroke-width="2.400"><path d="M9.500 1L2.500 8.500l7 7.500M2 8.500h34q6.500 0 6.500 6.700T36 22H20"/></svg>
            </button>
            <button type="button" aria-label="Домой" class="flex h-12 w-[170px] items-center justify-center">
                <svg class="h-[26px] w-12" viewBox="0 0 48 26" fill="none" stroke="#9c9c9c" stroke-width="2.400"><path d="M2 9.500L24 1.500l22 8v15H2z"/></svg>
            </button>
            <button type="button" aria-label="Недавние" class="flex h-12 w-[170px] items-center justify-center">
                <svg class="h-6 w-[46px]" viewBox="0 0 46 24" fill="none" stroke="#9c9c9c" stroke-width="2.500"><path d="M3 8.500h35V22H3zM13 2h31v15"/></svg>
            </button>
        </div>
        <button type="button" aria-label="Ещё" class="mr-[22px] flex h-12 w-6 items-center justify-center justify-self-end">
            <svg class="h-[26px] w-2" viewBox="0 0 8 26" fill="#a3a3a3"><circle cx="4" cy="3.500" r="3.300"/><circle cx="4" cy="13" r="3.300"/><circle cx="4" cy="22.500" r="3.300"/></svg>
        </button>
    </nav>
</div>
</body>
</html>
